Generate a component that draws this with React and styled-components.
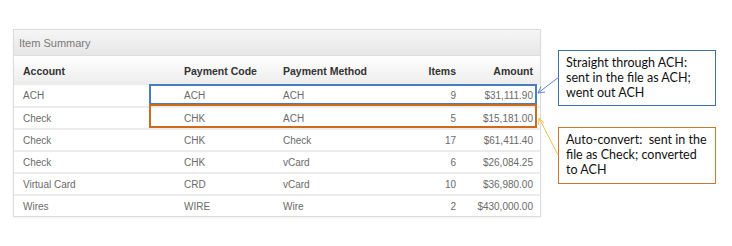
import React from 'react'
import styled, { createGlobalStyle } from 'styled-components'

const GlobalStyle = createGlobalStyle`
    html, body {
        margin: 0;
        padding: 0;
        background: #fff;
    }
    body {
        width: 732px;
        height: 246px;
        overflow: hidden;
        font-family: "Liberation Sans", Arial, sans-serif;
    }
`

const rows = [
    { account: 'ACH', code: 'ACH', method: 'ACH', items: 9, amount: '$31,111.90' },
    { account: 'Check', code: 'CHK', method: 'ACH', items: 5, amount: '$15,181.00' },
    { account: 'Check', code: 'CHK', method: 'Check', items: 17, amount: '$61,411.40' },
    { account: 'Check', code: 'CHK', method: 'vCard', items: 6, amount: '$26,084.25' },
    { account: 'Virtual Card', code: 'CRD', method: 'vCard', items: 10, amount: '$36,980.00' },
    { account: 'Wires', code: 'WIRE', method: 'Wire', items: 2, amount: '$430,000.00' },
]

const App = () => {
    return (
        <>
            <GlobalStyle />
            <Page>
                <Panel>
                    <PanelTitle>Item Summary</PanelTitle>
                    <HeadRow>
                        <Cell>Account</Cell>
                        <Cell>Payment Code</Cell>
                        <Cell>Payment Method</Cell>
                        <Cell $right>Items</Cell>
                        <Cell $right>Amount</Cell>
                    </HeadRow>
                    <Body>
                        {rows.map((r, i) => (
                            <Row key={i}>
                                <Cell>{r.account}</Cell>
                                <Cell>{r.code}</Cell>
                                <Cell>{r.method}</Cell>
                                <Cell $right>{r.items}</Cell>
                                <Cell $right>{r.amount}</Cell>
                            </Row>
                        ))}
                        <Highlight $color="#4a7cc0" $top={-1} $height={21} />
                        <Highlight $color="#cc6a1e" $top={19} $height={24} />
                    </Body>
                </Panel>

                <Callouts>
                    <Callout $color="#3f6fa6" $height={56}>
                        Straight through ACH:<br />
                        sent in the file as ACH;<br />
                        went out ACH
                    </Callout>
                    <Callout $color="#c9782f" $height={57}>
                        Auto-convert:&nbsp; sent in the<br />
                        file as Check; converted<br />
                        to ACH
                    </Callout>
                </Callouts>

                <Arrows width="40" height="100" viewBox="0 0 40 100">
                    {/* blue: callout 1 -> ACH row */}
                    <line x1="29" y1="7" x2="8" y2="23" stroke="#5b86cf" strokeWidth="1" />
                    <polyline points="15,22 8,23 11,16.5" fill="none" stroke="#5b86cf" strokeWidth="1" />
                    {/* yellow: callout 2 -> Check row */}
                    <line x1="28" y1="85" x2="9" y2="48" stroke="#f2c14e" strokeWidth="1" />
                    <polyline points="8.5,55 9,48 14,53" fill="none" stroke="#f2c14e" strokeWidth="1" />
                </Arrows>
            </Page>
        </>
    )
}

const Page = styled.div`
    position: relative;
    display: flex;
    align-items: flex-start;
    padding: 29px 0 0 13px;
`

const Panel = styled.div`
    width: 526px;
    border: 1px solid #dcdcdc;
    box-shadow: 0 1px 2px rgba(0,0,0,.06);
    background: #fff;
`

const PanelTitle = styled.div`
    height: 25px;
    display: flex;
    align-items: center;
    padding-left: 5px;
    font-size: 11px;
    color: #7a7a7a;
    background: linear-gradient(#f6f6f6, #e6e6e6);
    border-bottom: 1px solid #dedede;
`

const grid = `
    display: grid;
    grid-template-columns: 161px 99px 1fr 56px 77px;
    align-items: center;
    padding: 0 7px 0 9px;
`

const HeadRow = styled.div`
    ${grid}
    height: 29px;
    font-size: 10.5px;
    font-weight: bold;
    color: #333;
    background: linear-gradient(#ffffff, #ececec);
`

const Body = styled.div`
    position: relative;
`

const Row = styled.div`
    ${grid}
    height: 20px;
    font-size: 10px;
    color: #6a6a6a;
    border-top: 2px solid #ececec;

    &:first-child {
        border-top: none;
        height: 21px;
    }
`

const Cell = styled.div`
    text-align: ${p => (p.$right ? 'right' : 'left')};
    white-space: nowrap;
`

const Highlight = styled.div`
    position: absolute;
    left: 135px;
    right: 3px;
    top: ${p => p.$top}px;
    height: ${p => p.$height}px;
    border: 2px solid ${p => p.$color};
    box-sizing: border-box;
    pointer-events: none;
`

const Callouts = styled.div`
    display: flex;
    flex-direction: column;
    gap: 21px;
    margin: 21px 0 0 17px;
`

const Callout = styled.div`
    width: 158px;
    height: ${p => p.$height}px;
    box-sizing: border-box;
    border: 1px solid ${p => p.$color};
    padding: 4px 0 0 7px;
    font-family: Lato, "Open Sans", sans-serif;
    font-size: 12.5px;
    line-height: 15px;
    color: #111;
    background: #fff;
`

const Arrows = styled.svg`
    position: absolute;
    left: 530px;
    top: 70px;
    overflow: visible;
    pointer-events: none;
`

export default App
